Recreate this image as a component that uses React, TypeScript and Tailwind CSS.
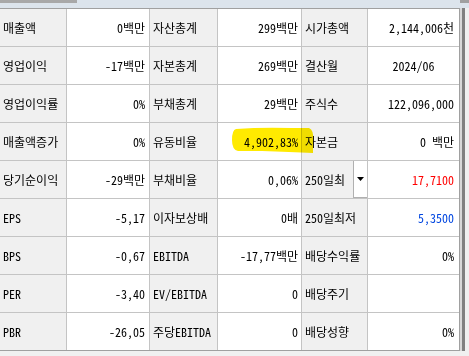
import type { ReactNode } from "react"

type Cell = {
  text: ReactNode
  align?: "left" | "right" | "center"
  color?: string
}

const rows: [string, string, string, string, string, Cell][] = [
  ["매출액", "0백만", "자산총계", "299백만", "시가총액", { text: "2,144,006천" }],
  ["영업이익", "-17백만", "자본총계", "269백만", "결산월", { text: "2024/06", align: "center" }],
  ["영업이익률", "0%", "부채총계", "29백만", "주식수", { text: "122,096,000" }],
  ["매출액증가", "0%", "유동비율", "4,902,83%", "자본금", { text: "0 백만" }],
  ["당기순이익", "-29백만", "부채비율", "0,06%", "250일최", { text: "17,7100", color: "text-[#ff0000]" }],
  ["EPS", "-5,17", "이자보상배", "0배", "250일최저", { text: "5,3500", color: "text-[#0046e0]" }],
  ["BPS", "-0,67", "EBITDA", "-17,77백만", "배당수익률", { text: "0%" }],
  ["PER", "-3,40", "EV/EBITDA", "0", "배당주기", { text: "" }],
  ["PBR", "-26,05", "주당EBITDA", "0", "배당성향", { text: "0%" }],
]

function Label({ children }: { children: ReactNode }) {
  return (
    <div className="bg-[#f0f0f0] flex items-center pl-[3px] whitespace-nowrap overflow-hidden">
      {children}
    </div>
  )
}

function Value({ children, className = "" }: { children: ReactNode; className?: string }) {
  return (
    <div className={`bg-white flex items-center justify-end pr-[3px] whitespace-nowrap ${className}`}>
      {children}
    </div>
  )
}

export default function App() {
  return (
    <div
      className="relative w-[469px] h-[356px] bg-[#f0f0f0] overflow-hidden text-[12px] text-black leading-none"
      style={{ fontFamily: '"Noto Sans Mono CJK KR", "Noto Sans CJK KR", "DejaVu Sans Mono", monospace' }}
    >
      {/* top strip */}
      <div className="h-[8px] bg-[#dce4ec] flex items-start justify-between">
        <div className="w-[77px] h-[3px] bg-[#a8a8a8]" />
        <div className="w-[9px] h-[3px] bg-[#a0a0a0]" />
      </div>

      <div className="flex">
        <div className="w-[460px] border-t border-b border-[#a0a0a0] border-r">
          <div className="grid grid-cols-[66px_82px_67px_83px_65px_91px] auto-rows-[37px] gap-px bg-[#c4c4c4]">
            {rows.map((r, i) => (
              <div key={i} className="contents">
                <Label>{r[0]}</Label>
                <Value className="pr-[4px]">{r[1]}</Value>
                <Label>{r[2]}</Label>
                <Value className="pr-[2px]">{r[3]}</Value>
                {i === 4 ? (
                  <div className="bg-[#f0f0f0] flex items-stretch">
                    <div className="flex-1 flex items-center pl-[3px] whitespace-nowrap">{r[4]}</div>
                    <div className="w-[14px] bg-white border-l border-b border-[#b0b0b0] flex items-center justify-center">
                      <svg width="7" height="4" viewBox="0 0 7 4">
                        <path d="M0 0 L7 0 L3.5 4 Z" fill="#000" />
                      </svg>
                    </div>
                  </div>
                ) : (
                  <Label>{r[4]}</Label>
                )}
                <div
                  className={`bg-white flex items-center whitespace-nowrap ${
                    r[5].align === "center" ? "justify-center" : "justify-end pr-[5px]"
                  } ${r[5].color ?? ""}`}
                >
                  {r[5].text}
                </div>
              </div>
            ))}
          </div>
        </div>
        <div className="w-[2px] bg-[#d8d8d8]" />
        <div className="w-[3px] bg-[#808080]" />
      </div>

      {/* highlighter mark */}
      <svg
        className="absolute inset-0 pointer-events-none mix-blend-multiply"
        width="469"
        height="356"
        viewBox="0 0 469 356"
      >
        <path
          d="M236 129 Q262 127 292 128 L309 128 Q314 130 313 140 L313 153 Q290 152 262 151 L238 151 Q232 150 232 140 Q232 130 236 129 Z"
          fill="#ffea00"
        />
      </svg>
    </div>
  )
}
